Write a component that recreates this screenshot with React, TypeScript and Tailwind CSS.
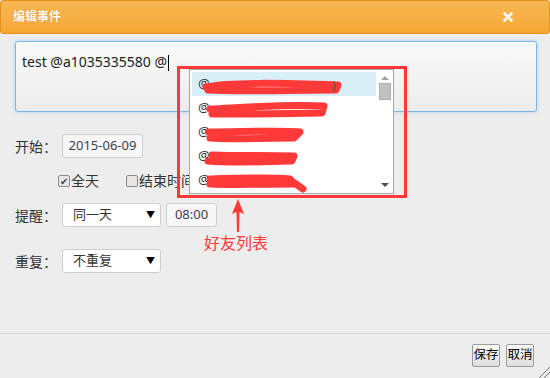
import React from 'react';

const items = ['@', '@', '@', '@', '@'];

const FriendList: React.FC = () => {
  return (
    <div className="absolute left-[189px] top-[69px] w-[205px] h-[125px] border border-[#a6a6a6] bg-white flex">
      <div className="flex-1 flex flex-col pt-[2px] pl-[2px]">
        {items.map((it, i) => (
          <div
            key={i}
            className={`h-[24px] flex items-center pl-[6px] text-[13px] text-[#333] ${i === 0 ? 'bg-[#d8eff8]' : ''}`}
          >
            {it}
          </div>
        ))}
      </div>
      <div className="w-[17px] flex flex-col items-center justify-between py-[6px]">
        <div className="flex flex-col items-center gap-[3px]">
          <div className="w-0 h-0 border-l-[4px] border-r-[4px] border-b-[4px] border-l-transparent border-r-transparent border-b-[#a3a3a3]" />
          <div className="w-[12px] h-[17px] bg-[#c1c1c1] border border-[#adadad]" />
        </div>
        <div className="w-0 h-0 border-l-[4px] border-r-[4px] border-t-[4px] border-l-transparent border-r-transparent border-t-[#505050]" />
      </div>
      {/* red scribbles over the names */}
      <svg className="absolute left-0 top-0" width="205" height="125" viewBox="0 0 205 125" fill="none">
        <g stroke="#ff3838" strokeLinecap="round" strokeLinejoin="round">
          <path d="M16 17 C40 12, 90 13, 148 15 L146 20 C100 20, 50 22, 18 20" strokeWidth="7" />
          <text x="142" y="20" fontSize="12" fill="#555" stroke="none">)</text>
          <path d="M20 39 C60 37, 100 34, 134 36 L132 43 C90 44, 50 44, 22 44" strokeWidth="7" />
          <path d="M19 62 C50 62, 90 60, 110 62 L104 68 C70 68, 40 70, 20 68" strokeWidth="7" />
          <path d="M22 85 C50 86, 80 85, 104 86 L102 91 C70 92, 40 93, 18 91" strokeWidth="7" />
          <path d="M20 109 C50 108, 80 107, 100 109 L104 114 C70 114, 40 115, 20 114 M100 110 L113 119" strokeWidth="7" />
        </g>
      </svg>
    </div>
  );
};

const Annotation: React.FC = () => {
  return (
    <>
      <div className="absolute left-[177px] top-[66px] w-[230px] h-[132px] border-[3px] border-[#ff3838]" />
      <svg className="absolute left-[230px] top-[199px]" width="16" height="34" viewBox="0 0 16 34">
        <path d="M8 0 L14 15 L9.5 13 L9 33 L7 33 L6.5 13 L2 15 Z" fill="#ff3838" />
      </svg>
      <div className="absolute left-[204px] top-[232px] text-[16px] leading-[22px] text-[#ff3838]">好友列表</div>
    </>
  );
};

const Select: React.FC<{ label: string }> = ({ label }) => (
  <div className="w-[99px] h-[24px] bg-white border border-[#cfcfcf] rounded-[3px] flex items-center justify-between pl-[10px] pr-[5px] text-[13px] text-[#333]">
    <span>{label}</span>
    <span className="text-[9px] text-black">▼</span>
  </div>
);

const App: React.FC = () => {
  return (
    <div
      className="relative w-[550px] h-[378px] overflow-hidden bg-[#ededed] text-[#333]"
      style={{ fontFamily: '"Noto Sans", "Noto Sans CJK SC", sans-serif' }}
    >
      {/* title bar */}
      <div className="h-[34px] rounded-[3px] border border-[#e4901c] bg-gradient-to-b from-[#f7b64f] via-[#f6b046] to-[#f4a630] flex items-center justify-between pl-[12px] pr-[36px]">
        <span className="text-[12px] font-bold text-white [text-shadow:0_0_1px_#c06a00]">编辑事件</span>
        <svg width="10" height="10" viewBox="0 0 10 10">
          <path d="M1.5 1.5 L8.5 8.5 M8.5 1.5 L1.5 8.5" stroke="white" strokeWidth="2.6" strokeLinecap="square" />
        </svg>
      </div>

      <div className="px-[15px] pt-[7px]">
        {/* textarea */}
        <div className="h-[71px] w-[522px] rounded-[3px] border border-[#79b7e7] shadow-[0_0_4px_#a9d2f2] bg-gradient-to-b from-[#fafafa] to-[#ececec] px-[6px] pt-[7px]">
          <span className="text-[14px] text-[#222]">test @a1035335580 @</span>
          <span className="inline-block w-[1px] h-[16px] bg-black align-middle ml-[1px]" />
        </div>

        {/* form */}
        <div className="mt-[22px] flex flex-col text-[14px]">
          <div className="flex items-center h-[24px]">
            <span className="w-[47px]">开始：</span>
            <div className="w-[81px] h-[24px] rounded-[3px] border border-[#cfcfcf] bg-[#f7f7f7] flex items-center justify-center text-[13px] text-[#3a3f55]">
              2015-06-09
            </div>
          </div>

          <div className="flex items-center h-[45px] pl-[43px]">
            <span className="w-[12px] h-[12px] border border-[#8c8c8c] rounded-[2px] bg-[#e6e6e6] flex items-center justify-center text-[10px] leading-none text-[#444]">✔</span>
            <span className="ml-[1px]">全天</span>
            <span className="ml-[27px] w-[12px] h-[12px] border border-[#8c8c8c] rounded-[2px] bg-[#e6e6e6]" />
            <span className="ml-[1px]">结束时间</span>
          </div>

          <div className="flex items-center h-[24px]">
            <span className="w-[47px]">提醒：</span>
            <Select label="同一天" />
            <div className="ml-[5px] w-[51px] h-[24px] rounded-[3px] border border-[#cfcfcf] bg-[#f7f7f7] flex items-center justify-center text-[13px] text-[#3a3f55]">
              08:00
            </div>
          </div>

          <div className="flex items-center h-[24px] mt-[22px]">
            <span className="w-[47px]">重复：</span>
            <Select label="不重复" />
          </div>
        </div>
      </div>

      {/* footer */}
      <div className="absolute left-0 right-0 top-[333px] border-t border-[#d6d6d6]" />
      <div className="absolute right-[16px] top-[344px] flex gap-[6px]">
        <button className="w-[28px] h-[23px] p-0 whitespace-nowrap border border-[#9b9b9b] rounded-[2px] bg-gradient-to-b from-[#fbfbfb] to-[#dedede] text-[12.5px] text-black leading-none flex items-center justify-center">保存</button>
        <button className="w-[28px] h-[23px] p-0 whitespace-nowrap border border-[#9b9b9b] rounded-[2px] bg-gradient-to-b from-[#fbfbfb] to-[#dedede] text-[12.5px] text-black leading-none flex items-center justify-center">取消</button>
      </div>
      <svg className="absolute right-0 bottom-0" width="14" height="14" viewBox="0 0 14 14">
        <path d="M3 14 L14 3 M8 14 L14 8" stroke="#777" strokeWidth="1" />
      </svg>

      <FriendList />
      <Annotation />
    </div>
  );
};

export default App;
